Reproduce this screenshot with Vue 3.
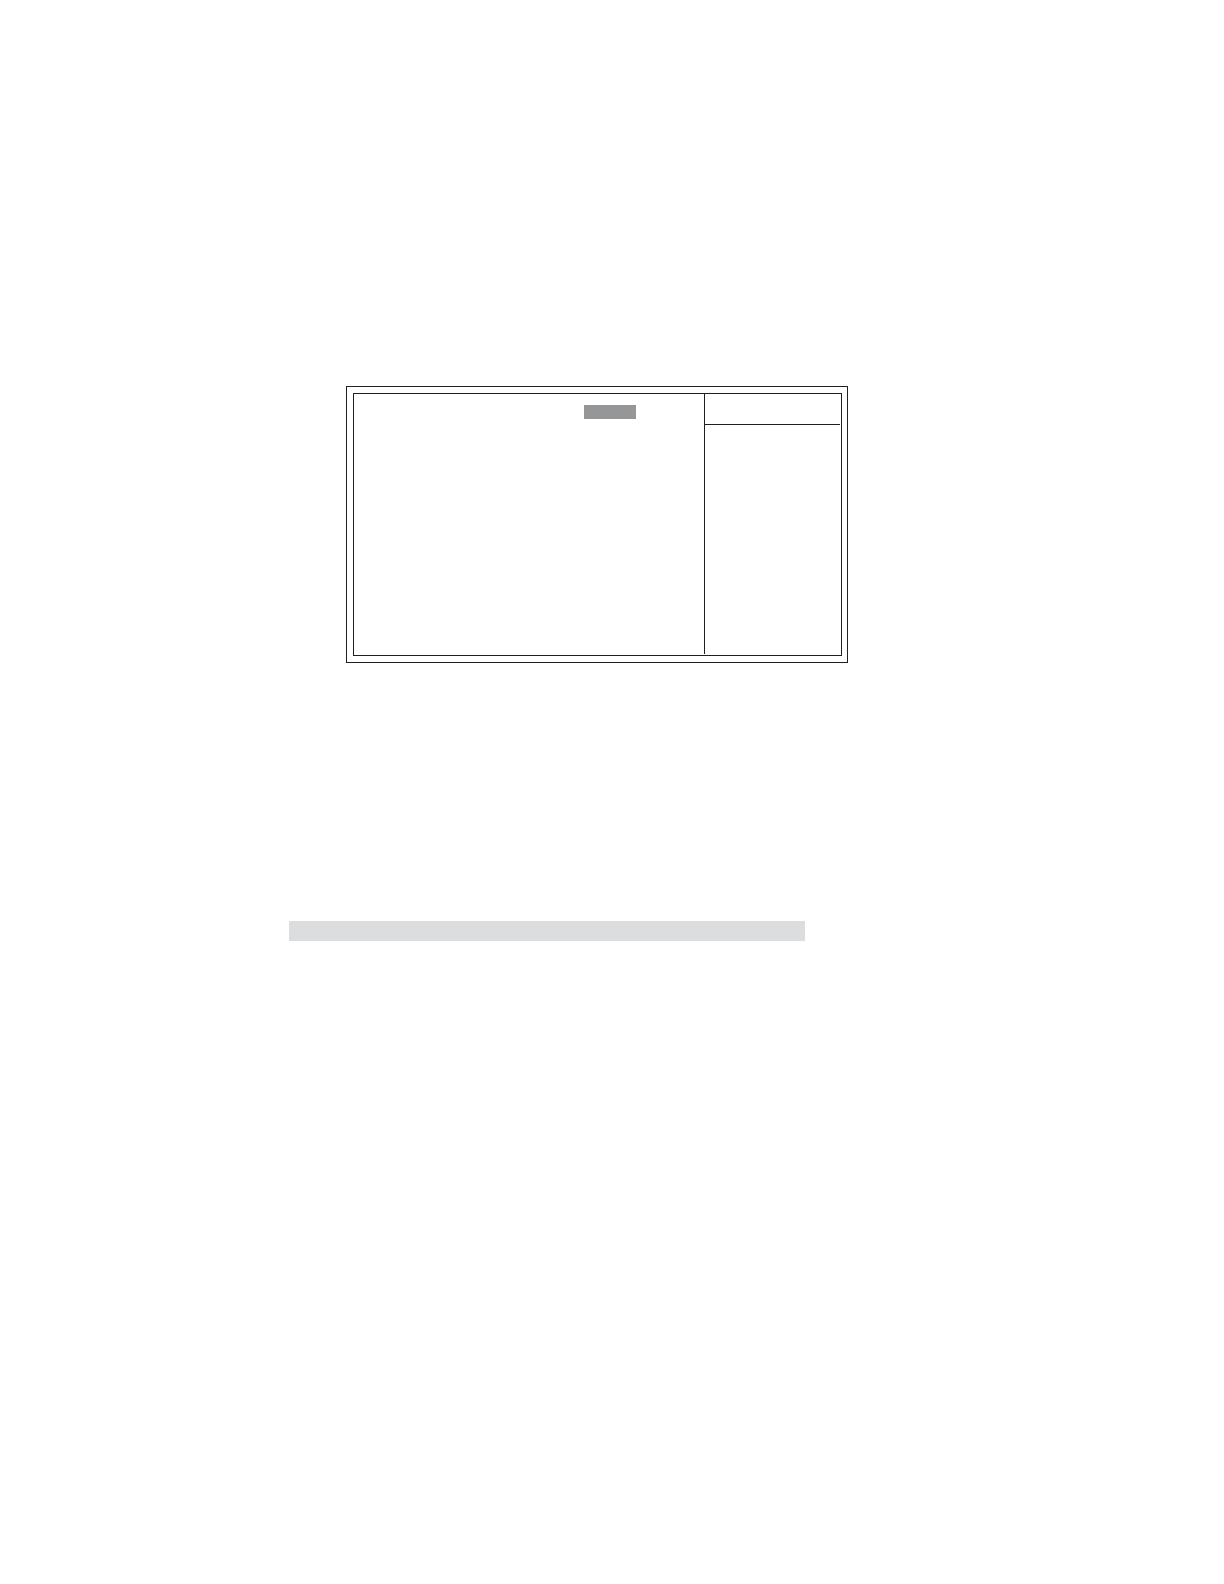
<template>
  <main class="page">
    <section class="setup-panel">
      <div class="setup-inner">
        <div class="setup-items">
          <div class="setup-selected"></div>
        </div>
        <aside class="setup-help">
          <div class="setup-help-title"></div>
        </aside>
      </div>
    </section>
    <div class="shaded-row"></div>
  </main>
</template>

<script setup>
</script>

<style>
body {
  background: #fff;
}
</style>

<style scoped>
.page {
  box-sizing: border-box;
  min-height: 100vh;
  padding: 386px 376px 0 289px;
  background: #fff;
}

/* double frame around the setup screen */
.setup-panel {
  margin-left: 57px;
  padding: 6px 5px 6px 6px;
  border: 1px solid #231f20;
}

.setup-inner {
  display: grid;
  grid-template-columns: 1fr 136px;
  min-height: 260px;
  padding: 0 1px 1px 0;
  border: 1px solid #231f20;
}

.setup-items {
  display: flex;
  align-items: flex-start;
  justify-content: flex-end;
  padding: 11px 68px 0 0;
}

/* highlighted value */
.setup-selected {
  width: 52px;
  height: 14px;
  background: #959698;
}

.setup-help {
  border-left: 1px solid #231f20;
}

.setup-help-title {
  height: 30px;
  border-bottom: 1px solid #231f20;
}

.shaded-row {
  height: 20px;
  margin: 258px 43px 0 0;
  background: #dcddde;
}
</style>
